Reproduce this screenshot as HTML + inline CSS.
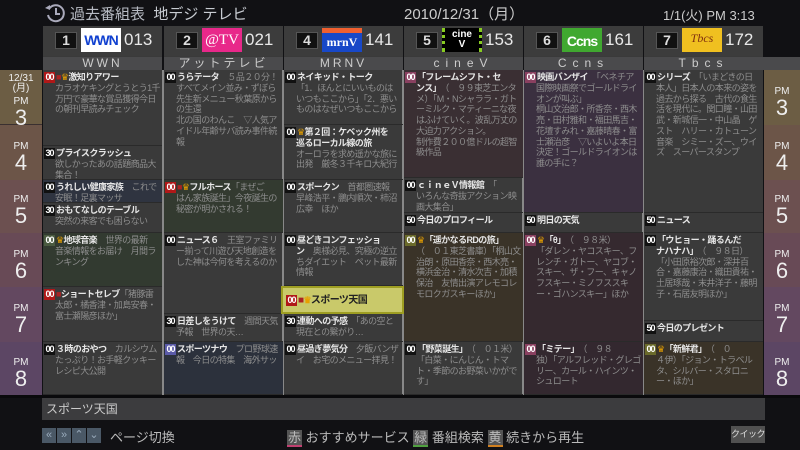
<!DOCTYPE html>
<html><head><meta charset="utf-8"><style>
*{margin:0;padding:0;box-sizing:border-box}
body{width:800px;height:450px;background:#111114;position:relative;overflow:hidden;font-family:"Liberation Sans","Noto Sans CJK JP",sans-serif;color:#ccc}
.a{position:absolute}
.col{position:absolute;top:26px;width:119px;height:369px;background:#3a3a3a}
.ch{position:absolute;top:26px;height:30px;width:119px;background:#3c3c3c}
.nb{position:absolute;left:12px;top:6px;width:22px;height:17px;background:#111;border:1px solid #555;color:#ddd;font-size:14px;font-weight:bold;text-align:center;line-height:15px}
.lg{position:absolute;left:38px;top:2px;width:40px;height:24px;overflow:hidden}
.cn{position:absolute;left:81px;top:4px;font-size:17px;color:#e8e8e8}
.nm{position:absolute;top:57px;height:13px;width:119px;background:#4a4a4c;text-align:center;font-size:12px;line-height:13px;letter-spacing:3px;color:#ccc}
.c{position:absolute;width:119px;overflow:hidden;padding:2px 2px 0 1px;font-size:9px;line-height:10.7px;letter-spacing:-0.6px;color:#8e8e8e;border-bottom:1px solid #2a2a2a}
.c b{color:#e6e6e6;font-weight:bold}
.c .d{padding-left:11px;display:block}
.t{display:inline-block;width:11px;height:11px;background:#111;color:#fff;font-size:9px;line-height:11px;text-align:center;letter-spacing:-1px;font-weight:bold;margin-right:1px}
.r{background:#b01818}.p{background:#8a4060}.o{background:#6a6a2a}.bl{background:#5a5aa8}
.k{color:#e6a000;font-size:9px}
.h{position:absolute;width:42px;text-align:center;color:#eee}
.h .pm{font-size:10px;display:block;line-height:11px}
.h .n{font-size:22px;line-height:22px;display:block}
</style></head><body>
<svg class="a" style="left:44px;top:3px" width="22" height="20" viewBox="0 0 22 20"><path d="M5 6 A8 8 0 1 1 4 12" fill="none" stroke="#aab" stroke-width="2"/><path d="M1 5 L6 7 L6 2 Z" fill="#aab"/><path d="M12 5 V11 H16" fill="none" stroke="#aab" stroke-width="2"/></svg>
<div class="a" style="left:70px;top:3px;font-size:15px;color:#b8bcc4">過去番組表 &nbsp;<span style="color:#c8ccd2">地デジ テレビ</span></div>
<div class="a" style="left:404px;top:3px;font-size:15px;color:#ccc">2010/12/31（月）</div>
<div class="a" style="left:663px;top:5px;font-size:13px;color:#ccc">1/1(火) PM 3:13</div>

<div class="col" style="left:43px"></div><div class="col" style="left:164px"></div><div class="col" style="left:284px"></div><div class="col" style="left:404px"></div><div class="col" style="left:524px"></div><div class="col" style="left:644px"></div>
<div class="a" style="left:162px;top:70px;width:2px;height:325px;background:#888"></div>
<div class="a" style="left:282px;top:70px;width:2px;height:325px;background:#888"></div>
<div class="a" style="left:402px;top:70px;width:2px;height:325px;background:#888"></div>
<div class="a" style="left:522px;top:70px;width:2px;height:325px;background:#888"></div>
<div class="a" style="left:642px;top:70px;width:2px;height:325px;background:#888"></div>

<div class="ch" style="left:43px"><div class="nb">1</div><div class="lg" style="background:#fff;color:#1040d0;font-weight:bold;font-size:14px;line-height:24px;text-align:center;letter-spacing:-1px">WWN</div><div class="cn">013</div></div>
<div class="ch" style="left:164px"><div class="nb">2</div><div class="lg" style="background:#e8288a;color:#fff;font-size:15px;line-height:24px;text-align:center;font-family:'Liberation Serif',serif">@TV</div><div class="cn">021</div></div>
<div class="ch" style="left:284px"><div class="nb">4</div><div class="lg" style="background:#1848c8;border-top:5px solid #f06030;color:#fff;font-weight:bold;font-size:12px;line-height:18px;text-align:center;font-family:'Liberation Serif',serif">mrnV</div><div class="cn">141</div></div>
<div class="ch" style="left:404px"><div class="nb">5</div><div class="lg" style="background:#000;color:#fff;font-weight:bold;font-size:10px;line-height:10px;text-align:center;padding-top:2px;border-left:3px dotted #8c2;border-right:3px dotted #8c2">cine<br>V</div><div class="cn">153</div></div>
<div class="ch" style="left:524px"><div class="nb">6</div><div class="lg" style="background:#40a830;color:#fff;font-weight:bold;font-size:14px;line-height:26px;text-align:center;letter-spacing:-1px">Ccns</div><div class="cn">161</div></div>
<div class="ch" style="left:644px"><div class="nb">7</div><div class="lg" style="background:#f0c020;color:#803010;font-style:italic;font-size:12px;line-height:20px;text-align:center;font-family:'Liberation Serif',serif">Tbcs</div><div class="cn">172</div></div>
<div class="nm" style="left:43px">WWN</div><div class="nm" style="left:164px">アットテレビ</div><div class="nm" style="left:284px">MRNV</div><div class="nm" style="left:404px;letter-spacing:6px">cineV</div><div class="nm" style="left:524px;letter-spacing:6px">Ccns</div><div class="nm" style="left:644px;letter-spacing:6px">Tbcs</div>
<div class="a" style="left:763px;top:57px;width:37px;height:13px;background:#4a4a4c"></div>

<div class="a" style="left:0;top:70px;width:42px;height:55px;background:#6c5d44"></div>
<div class="a" style="left:0;top:125px;width:42px;height:55px;background:#6c5548"></div>
<div class="a" style="left:0;top:180px;width:42px;height:53px;background:#6c5050"></div>
<div class="a" style="left:0;top:233px;width:42px;height:54px;background:#684a56"></div>
<div class="a" style="left:0;top:287px;width:42px;height:55px;background:#634860"></div>
<div class="a" style="left:0;top:342px;width:42px;height:53px;background:#5c4664"></div>
<div class="a" style="left:764px;top:70px;width:36px;height:55px;background:#6c5d44"></div>
<div class="a" style="left:764px;top:125px;width:36px;height:55px;background:#6c5548"></div>
<div class="a" style="left:764px;top:180px;width:36px;height:53px;background:#6c5050"></div>
<div class="a" style="left:764px;top:233px;width:36px;height:54px;background:#684a56"></div>
<div class="a" style="left:764px;top:287px;width:36px;height:55px;background:#634860"></div>
<div class="a" style="left:764px;top:342px;width:36px;height:53px;background:#5c4664"></div>
<div class="a" style="left:0;top:124px;width:42px;height:1px;background:#3a3030"></div>
<div class="h" style="left:0;top:74px;font-size:10px;line-height:10px">12/31<br>(月)</div>
<div class="h" style="left:0;top:96px"><span class="pm">PM</span><span class="n">3</span></div>
<div class="h" style="left:0;top:141px"><span class="pm">PM</span><span class="n">4</span></div>
<div class="h" style="left:0;top:194px"><span class="pm">PM</span><span class="n">5</span></div>
<div class="h" style="left:0;top:249px"><span class="pm">PM</span><span class="n">6</span></div>
<div class="h" style="left:0;top:303px"><span class="pm">PM</span><span class="n">7</span></div>
<div class="h" style="left:0;top:357px"><span class="pm">PM</span><span class="n">8</span></div>
<div class="h" style="left:761px;top:86px"><span class="pm">PM</span><span class="n">3</span></div>
<div class="h" style="left:761px;top:141px"><span class="pm">PM</span><span class="n">4</span></div>
<div class="h" style="left:761px;top:194px"><span class="pm">PM</span><span class="n">5</span></div>
<div class="h" style="left:761px;top:249px"><span class="pm">PM</span><span class="n">6</span></div>
<div class="h" style="left:761px;top:303px"><span class="pm">PM</span><span class="n">7</span></div>
<div class="h" style="left:761px;top:357px"><span class="pm">PM</span><span class="n">8</span></div>

<div class="c" style="left:43px;top:70px;height:76px"><span class="t r">00</span><span style="color:#a22">■</span><span class="k">♛</span><b>激知りアワー</b><span class="d">カラオケキングとうとう1千万円で豪華な賞品獲得今日の朝刊早読みチェック</span></div>
<div class="c" style="left:43px;top:146px;height:34px"><span class="t">30</span><b>プライスクラッシュ</b><span class="d">欲しかったあの話題商品大集合！</span></div>
<div class="c" style="left:43px;top:180px;height:23px;background:#2f3440"><span class="t">00</span><b>うれしい健康家族</b>　これで<span class="d">安眠！足裏マッサ</span></div>
<div class="c" style="left:43px;top:203px;height:30px"><span class="t">30</span><b>おもてなしのテーブル</b><span class="d">突然の来客でも困らない</span></div>
<div class="c" style="left:43px;top:233px;height:54px;background:#323a30"><span class="t" style="background:#4a5a40">00</span><span class="k">♛</span><b>地球音楽</b>　世界の最新<span class="d">音楽情報をお届け　月間ランキング</span></div>
<div class="c" style="left:43px;top:287px;height:55px"><span class="t r">00</span><span style="color:#a22">■</span><b>ショートセレブ</b>「猪豚雷<span class="d">太郎・橘香津・加島安春・富士瀬陽彦ほか」</span></div>
<div class="c" style="left:43px;top:342px;height:53px"><span class="t">00</span><b>３時のおやつ</b>　カルシウム<span class="d">たっぷり！お手軽クッキーレシピ大公開</span></div>

<div class="c" style="left:164px;top:70px;height:110px"><span class="t">00</span><b>うらテータ</b>　５品２０分！<span class="d">すべてメイン並み・ずぼら先生新メニュー秋葉原からの生還<br>北の国のわんこ　▽人気アイドル年齢サバ読み事件続報</span></div>
<div class="c" style="left:164px;top:180px;height:53px;background:#333a30"><span class="t r">00</span><span style="color:#a22">■</span><span class="k">♛</span><b>フルホース</b>「まぜご<span class="d">はん家族誕生」今夜誕生の秘密が明かされる！</span></div>
<div class="c" style="left:164px;top:233px;height:81px"><span class="t">00</span><b>ニュース６</b>　王室ファミリ<span class="d">ー揃って川遊び天地創造をした神は今何を考えるのか</span></div>
<div class="c" style="left:164px;top:314px;height:28px"><span class="t">30</span><b>日差しをうけて</b>　週間天気<span class="d">予報　世界の天…</span></div>
<div class="c" style="left:164px;top:342px;height:53px;background:#2c313c"><span class="t bl">00</span><b>スポーツナウ</b>　プロ野球速<span class="d">報　今日の特集　海外サッ</span></div>

<div class="c" style="left:284px;top:70px;height:55px"><span class="t">00</span><b>ネイキッド・トーク</b><span class="d">「1．ほんとにいいものはいつもここから」「2．悪いものはなぜいつもここから</span></div>
<div class="c" style="left:284px;top:125px;height:55px"><span class="t">00</span><span class="k">♛</span><b>第２回：ケベック州を</b><span class="d"><b>巡るローカル線の旅</b><br>オーロラを求め遥かな旅に出発　厳冬３千キロ大紀行</span></div>
<div class="c" style="left:284px;top:180px;height:53px"><span class="t">00</span><b>スポークン</b>　首都圏速報<span class="d">早峰浩平・鵬内順次・柿沼広幸　ほか</span></div>
<div class="c" style="left:284px;top:233px;height:53px"><span class="t">00</span><b>昼どきコンフェッショ</b><span class="d"><b>ン</b>　奥様必見、究極の逆立ちダイエット　ペット最新情報</span></div>
<div class="c" style="left:284px;top:314px;height:28px"><span class="t">30</span><b>連動への予感</b>　「あの空と<span class="d">現在との繋がり…</span></div>
<div class="c" style="left:284px;top:342px;height:53px"><span class="t">00</span><b>昼過ぎ夢気分</b>　夕飯バンザ<span class="d">イ　お宅のメニュー拝見！</span></div>
<div class="a" style="left:281px;top:286px;width:123px;height:28px;background:#c9c96a;border:2px solid #9e9e22;padding:3px 0 0 3px;font-size:10px;color:#222;font-weight:bold;letter-spacing:-0.6px"><span class="t r">00</span><span style="color:#a22">■</span><span class="k">♛</span>スポーツ天国</div>

<div class="c" style="left:404px;top:70px;height:108px;background:#3a2f33"><span class="t p">00</span><b>「フレームシフト・セ</b><span class="d"><b>ンス」</b>　（　９９東芝エンタメ）「M・Nシャララ・ガトーミルク・マティーニな夜はふけていく。波乱万丈の大迫力アクション。<br>制作費２００億ドルの超智級作品</span></div>
<div class="c" style="left:404px;top:178px;height:35px"><span class="t">00</span><b>ｃｉｎｅＶ情報館</b>　「<span class="d">いろんな奇抜アクション映画大集合」</span></div>
<div class="c" style="left:404px;top:213px;height:20px"><span class="t">50</span><b>今日のプロフィール</b></div>
<div class="c" style="left:404px;top:233px;height:109px;background:#3a3328"><span class="t o">00</span><span class="k">♛</span><b>「遥かなるRDの旅」</b><span class="d">（　０１東芝書庫）「桐山文治朗・原田香奈・西木亮・横浜金治・清水次吉・加積保治　友情出演アレモコレモロクガスキーほか」</span></div>
<div class="c" style="left:404px;top:342px;height:53px"><span class="t">00</span><b>「野菜誕生」</b>　（　０１米）<span class="d">「白菜・にんじん・トマト・季節のお野菜いかがです」</span></div>

<div class="c" style="left:524px;top:70px;height:143px;background:#3b3040"><span class="t p">00</span><b>映画バンザイ</b>　「ベネチア<span class="d">国際映画祭でゴールドライオンが叫ぶ」<br>桐山文治郎・所香奈・西木亮・田村雅和・福田馬吉・花壇すみれ・嘉藤晴春・富士瀬治彦　▽いよいよ本日決定！ゴールドライオンは誰の手に？</span></div>
<div class="c" style="left:524px;top:213px;height:20px"><span class="t">50</span><b>明日の天気</b></div>
<div class="c" style="left:524px;top:233px;height:109px;background:#35292f"><span class="t p">00</span><span class="k">♛</span><b>「θ」</b>　（　９８米）<span class="d">「ダレン・ヤコスキー、フレンチ・ガトー、ヤコブ・スキー、ザ・フー、キャノフスキー・ミノフススキー・ゴハンスキー」ほか</span></div>
<div class="c" style="left:524px;top:342px;height:53px;background:#33282f"><span class="t p">00</span><b>「ミテー」</b>　（　９８<span class="d">独）「アルフレッド・グレゴリー、カール・ハインツ・シュロート</span></div>

<div class="c" style="left:644px;top:70px;height:143px"><span class="t">00</span><b>シリーズ</b>　「いまどきの日<span class="d">本人」日本人の本来の姿を過去から探る　古代の食生活を現代に。関口瞳・山田武・新城信一・中山晶　ゲスト　ハリー・カトューン　音楽　シミー・ズー、ウイズ　スーパースタンプ</span></div>
<div class="c" style="left:644px;top:213px;height:20px"><span class="t">50</span><b>ニュース</b></div>
<div class="c" style="left:644px;top:233px;height:88px"><span class="t">00</span><b>「ウヒョー・踊るんだ</b><span class="d"><b>ナハナハ」</b>　（　９８日）<br>「小田原裕次郎・深井百合・嘉藤康治・織田貴祐・土居琢哉・末井洋子・藤明子・石居友明ほか」</span></div>
<div class="c" style="left:644px;top:321px;height:21px"><span class="t">50</span><b>今日のプレゼント</b></div>
<div class="c" style="left:644px;top:342px;height:53px;background:#3a3328"><span class="t o">00</span><span class="k">♛</span><b>「新鮮君」</b>　（　０<span class="d">４伊）「ジョン・トラベルタ、シルバー・スタロニー・ほか」</span></div>

<div class="a" style="left:0;top:395px;width:800px;height:3px;background:#0a0a0c"></div>
<div class="a" style="left:42px;top:398px;width:723px;height:22px;background:#3c3c3e;font-size:12px;line-height:22px;padding-left:4px;color:#ccc">スポーツ天国</div>
<div class="a" style="left:42px;top:428px;font-size:11px;color:#9ab">
<span style="display:inline-block;width:14px;height:15px;background:#4a5866;text-align:center;line-height:15px">«</span><span style="display:inline-block;width:14px;height:15px;background:#4a5866;text-align:center;line-height:15px;margin-left:1px">»</span><span style="display:inline-block;width:14px;height:15px;background:#4a5866;text-align:center;line-height:15px;margin-left:1px">⌃</span><span style="display:inline-block;width:14px;height:15px;background:#4a5866;text-align:center;line-height:15px;margin-left:1px">⌄</span></div>
<div class="a" style="left:110px;top:427px;font-size:13px;color:#bbb">ページ切換</div>
<div class="a" style="left:287px;top:427px;font-size:13px;color:#bbb;white-space:nowrap"><span style="display:inline-block;background:#555;border-bottom:2px solid #c04070;padding:0 1px;line-height:15px">赤</span> おすすめサービス <span style="display:inline-block;background:#555;border-bottom:2px solid #50a040;padding:0 1px;line-height:15px">緑</span> 番組検索 <span style="display:inline-block;background:#555;border-bottom:2px solid #d08020;padding:0 1px;line-height:15px">黄</span> 続きから再生</div>
<div class="a" style="left:731px;top:426px;width:34px;height:17px;background:#505050;font-size:9px;line-height:17px;text-align:center;color:#ddd;letter-spacing:-0.5px">クイック</div>
</body></html>
